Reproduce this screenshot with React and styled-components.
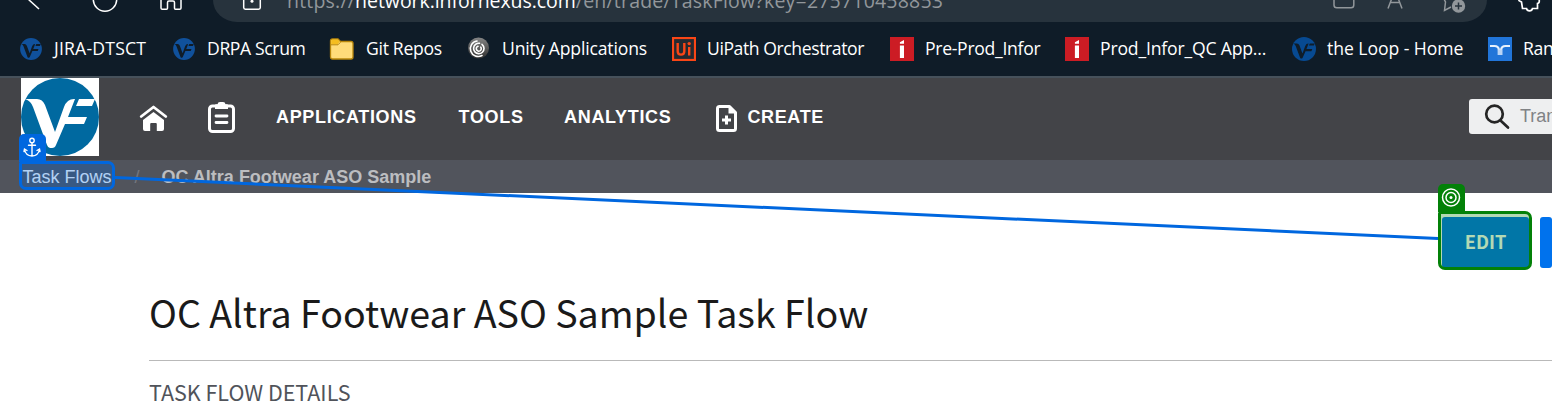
import React from "react";
import styled, { createGlobalStyle } from "styled-components";

const ui = `"Open Sans", "Noto Sans", sans-serif`;
const arial = `"Liberation Sans", Arial, sans-serif`;
const source = `"Noto Sans CJK SC", "Open Sans", sans-serif`;

const GlobalStyle = createGlobalStyle`
  * { box-sizing: border-box; }
  body { margin: 0; background: #fff; overflow: hidden; }
  svg { display: block; flex: none; }
`;

const Page = styled.div`
  position: relative;
  width: 1552px;
  height: 413px;
  overflow: hidden;
  background: #fff;
`;

const Toolbar = styled.div`
  display: flex;
  height: 22px;
  background: #0f1c28;
  color: #fff;
`;

const BrowserButtons = styled.div`
  width: 213px;
  flex: none;
`;

const AddressBar = styled.div`
  display: flex;
  align-items: flex-start;
  width: 1274px;
  height: 22px;
  flex: none;
  padding-left: 28px;
  overflow: hidden;
  background: #27333d;
  border-radius: 0 0 24px 24px / 0 0 22px 22px;
`;

const Url = styled.div`
  width: 1050px;
  margin: -13px 0 0 24px;
  font: 400 19.5px/27px ${ui};
  letter-spacing: 0.2px;
  color: #92979b;
  white-space: pre;
`;

const Host = styled.span`
  color: #fff;
  letter-spacing: -0.05px;
`;

const Bookmarks = styled.div`
  display: flex;
  align-items: center;
  height: 56px;
  padding-left: 19px;
  background: #0f1c28;
  border-bottom: 2px solid #46515b;
  overflow: hidden;
`;

const Bookmark = styled.div`
  display: flex;
  align-items: center;
  gap: 11px;
  flex: none;
  width: ${(p) => p.$width}px;
  font: 400 17.6px/24px ${ui};
  letter-spacing: ${(p) => p.$track}px;
  color: #fff;
  white-space: pre;
`;

const BookmarkLabel = styled.span`
  padding-bottom: 2px;
`;

const NavBar = styled.div`
  display: flex;
  align-items: flex-start;
  height: 82px;
  padding-left: 21px;
  background: #434448;
`;

const Logo = styled.div`
  width: 78px;
  height: 78px;
  flex: none;
  background: #fff;
`;

const NavIcon = styled.div`
  margin: ${(p) => p.$top}px 0 0 ${(p) => p.$left}px;
`;

const NavLink = styled.div`
  flex: none;
  margin: 29px 0 0 ${(p) => p.$left}px;
  font: 700 18px/21px ${arial};
  letter-spacing: 0.66px;
  color: #fff;
  white-space: pre;
`;

const Search = styled.div`
  display: flex;
  flex: none;
  align-items: center;
  gap: 10px;
  width: 120px;
  height: 35px;
  margin: 21px -37px 0 auto;
  padding-left: 15px;
  border-radius: 3px;
  background: #eeeff0;
  font: 400 18px/21px ${arial};
  color: #808285;
`;

const Crumbs = styled.div`
  display: flex;
  height: 33px;
  padding: 7px 0 0 22.5px;
  background: #51545c;
  font: 400 18px/21px ${arial};
  color: #bcbdc0;
  white-space: pre;
`;

const CrumbLink = styled.span`
  color: #fff;
`;

const Separator = styled.span`
  margin: 0 22px 0 23px;
  color: #74777f;
`;

const Current = styled.b`
  font-weight: 700;
`;

const Actions = styled.div`
  display: flex;
  justify-content: flex-end;
  gap: 11px;
  padding-top: 24px;
`;

const Button = styled.div`
  width: ${(p) => p.$width}px;
  height: 51px;
  border-radius: 3px;
  background: #0072ed;
  font: 700 18.2px/49px ${source};
  text-align: center;
  color: #fff;
`;

const Main = styled.div`
  margin: 13px 0 0 149px;
`;

const Title = styled.div`
  height: 80px;
  border-bottom: 1px solid #b9b9b9;
  font: 400 37.6px/62px ${source};
  color: #1a1a1a;
  white-space: pre;
`;

const Subtitle = styled.div`
  padding-top: 15px;
  font: 400 21.5px/32px ${source};
  color: #50535a;
  white-space: pre;
`;

const Connector = styled.svg`
  position: absolute;
  left: 0;
  top: 0;
  pointer-events: none;
`;

const Marker = styled.div`
  position: absolute;
  left: ${(p) => p.$x}px;
  top: ${(p) => p.$y}px;
  width: ${(p) => p.$w}px;
  height: ${(p) => p.$h}px;
  border: 3px solid ${(p) => p.$color};
  border-radius: 7px;
  border-top-left-radius: 3px;
  background: ${(p) => p.$fill};
`;

const MarkerTab = styled.div`
  position: absolute;
  left: -3px;
  top: -30px;
  width: 27px;
  height: 28px;
  border-radius: 5px 5px 0 0;
  background: ${(p) => p.$color};
`;

const VfMark = ({ size, bg, fg, inset = 0 }) => (
  <svg
    width={size}
    height={size}
    viewBox={`${-inset} ${-inset} ${78 + 2 * inset} ${78 + 2 * inset}`}
  >
    <circle cx="39" cy="39" r="39" fill={bg} />
    <path
      fill={fg}
      d="M4 21H16Q21.500 21 24 27L34 54L43 29Q46 21 53 21H54L47 39H66L63 46H44L35 67Q34 70 31 70H29Q27 70 26 67L12 29Q10 23 4 21ZM58 21H74L71 28H55Z"
    />
  </svg>
);

const Folder = () => (
  <svg width="26" height="24" viewBox="0 0 26 24">
    <path d="M1.5 4Q1.5 2 3.5 2H9L11.5 4.5H22Q24 4.5 24 6.5V20Q24 22 22 22H3.5Q1.5 22 1.5 20Z" fill="#ffdc7a" stroke="#b8860b" strokeWidth="1.3" />
    <path d="M2.2 4Q2.2 2.6 3.5 2.6H8.7L10.7 4.8L8.7 7.3H2.2Z" fill="#f5bd1f" />
    <path d="M2 7.8H9L11.5 5.2" fill="none" stroke="#b8860b" strokeWidth="1" />
  </svg>
);

const Citrix = () => (
  <svg width="24" height="24" viewBox="0 0 24 24">
    <defs>
      <linearGradient id="orb" x1="0" y1="0" x2="0" y2="1">
        <stop offset="0" stopColor="#858585" />
        <stop offset="1" stopColor="#303030" />
      </linearGradient>
    </defs>
    <circle cx="11.5" cy="11" r="10.5" fill="url(#orb)" />
    <g fill="none" stroke="#fff" strokeWidth="1.6" strokeLinecap="round">
      <path d="M10 4A7.8 7.8 0 1 0 15 18.5" />
      <path d="M12.5 6.3A5.2 5.2 0 1 0 17 11.500Q17 9 15 7.300" />
      <path d="M13.800 10.2A2.5 2.5 0 1 1 11 9.300" />
    </g>
  </svg>
);

const UiPath = () => (
  <svg width="24" height="24" viewBox="0 0 24 24">
    <rect x="1" y="1" width="22" height="22" fill="#242a31" stroke="#fa4616" strokeWidth="2.2" />
    <path d="M5.7 6V14.2Q5.7 17.6 9 17.6T12.3 14.2V6M17.2 10V18.6" fill="none" stroke="#fa4616" strokeWidth="2.4" />
    <circle cx="17.2" cy="6.6" r="1.7" fill="#fa4616" />
  </svg>
);

const Infor = () => (
  <svg width="24" height="24" viewBox="0 0 24 24">
    <rect width="24" height="24" fill="#cc1c24" />
    <path d="M9.9 5.2L14 3V6.7H9.9ZM9.9 8.5H14V21H9.9Z" fill="#fff" />
  </svg>
);

const Rand = () => (
  <svg width="24" height="24" viewBox="0 0 24 24">
    <rect width="24" height="24" fill="#2175d9" />
    <path d="M2 9H6.5Q10.5 9 11 13M22 9H17.5Q13.5 9 13 13" fill="none" stroke="#e8f1fc" strokeWidth="2.2" />
    <rect x="9.6" y="12.5" width="4.9" height="5.5" fill="#b9d4f5" />
  </svg>
);

const bookmarks = [
  { label: "JIRA-DTSCT", icon: "vfSmall", width: 153, track: 0.2 },
  { label: "DRPA Scrum", icon: "vfSmall", width: 157, track: -0.38 },
  { label: "Git Repos", icon: "folder", width: 138, track: -0.3 },
  { label: "Unity Applications", icon: "citrix", width: 205, track: -0.16 },
  { label: "UiPath Orchestrator", icon: "uipath", width: 218, track: -0.42 },
  { label: "Pre-Prod_Infor", icon: "infor", width: 175, track: -0.3 },
  { label: "Prod_Infor_QC App...", icon: "infor", width: 227, track: -0.18 },
  { label: "the Loop - Home", icon: "vf", width: 196, track: -0.06 },
  { label: "Rand", icon: "rand", width: 90, track: -0.3 },
];

const icons = {
  vf: <VfMark size={24} bg="#074a92" fg="#0f1c28" />,
  vfSmall: <VfMark size={24} inset={4} bg="#10519c" fg="#0f1c28" />,
  folder: <Folder />,
  citrix: <Citrix />,
  uipath: <UiPath />,
  infor: <Infor />,
  rand: <Rand />,
};

export default function App() {
  return (
    <>
      <GlobalStyle />
      <Page>
        <Toolbar>
          <BrowserButtons>
            <svg width="213" height="22" viewBox="0 0 213 22" fill="none" stroke="#fff" strokeWidth="1.5">
              <path d="M28 -1L39 9" />
              <circle cx="105" cy="-0.5" r="11.7" />
              <path d="M161 -3V8Q161 9.3 162.3 9.3H166.5Q167.5 9.3 167.5 8.3V2.5Q167.5 1 169 1H173Q174.5 1 174.5 2.5V8.3Q174.5 9.3 175.5 9.3H179.7Q181 9.3 181 8V-3" />
            </svg>
          </BrowserButtons>
          <AddressBar>
            <svg width="22" height="22" viewBox="0 0 22 22">
              <path d="M2.7 -4V7.5Q2.7 9.2 4.4 9.2H17.6Q19.3 9.2 19.3 7.5V-4" fill="none" stroke="#fff" strokeWidth="1.5" />
              <circle cx="11" cy="1.3" r="1.5" fill="#fff" />
            </svg>
            <Url>https://<Host>network.infornexus.com</Host>/en/trade/TaskFlow?key=275710458853</Url>
            <svg width="150" height="22" viewBox="1337 0 150 22" overflow="visible" fill="none" stroke="#92979b" strokeWidth="1.5">
              <path d="M1334 -3V5Q1334 7.8 1336.8 7.8H1351Q1353.8 7.8 1353.8 5V-3M1388 8.5L1393.5 -6M1402 8.5L1396.5 -6M1390.5 2.5H1399.5M1443.5 -2L1445.5 2L1444.5 10.5L1451 7" />
              <circle cx="1458.5" cy="6" r="6.7" fill="#92979b" stroke="none" />
              <path d="M1458.5 2.5V9.5M1455 6H1462" stroke="#27333d" />
            </svg>
          </AddressBar>
          <svg width="65" height="22" viewBox="1487 0 65 22" fill="none" stroke="#fff" strokeWidth="1.7">
            <path d="M1519 -1V0.5L1521.5 2L1522.5 8.5H1526.5Q1527 10.8 1529.5 10.8T1532.5 8.5H1537.5V3.5Q1540 3 1539 -1" />
          </svg>
        </Toolbar>
        <Bookmarks>
          {bookmarks.map((b) => (
            <Bookmark key={b.label} $width={b.width} $track={b.track}>
              {icons[b.icon]}
              <BookmarkLabel>{b.label}</BookmarkLabel>
            </Bookmark>
          ))}
        </Bookmarks>
        <NavBar>
          <Logo>
            <VfMark size={78} bg="#0069a0" fg="#fff" />
          </Logo>
          <NavIcon $top={27} $left={40}>
            <svg width="29" height="27" viewBox="139 105 29 27" fill="#fff">
              <path d="M141.2 116.5L153.5 107L165.8 116.5" fill="none" stroke="#fff" strokeWidth="2.8" strokeLinecap="round" strokeLinejoin="round" />
              <path d="M143 120L153.5 112L164 120V129Q164 131 162 131H156.8V124Q156.8 123 155.8 123H151.2Q150.2 123 150.2 124V131H145Q143 131 143 129Z" />
            </svg>
          </NavIcon>
          <NavIcon $top={23} $left={39}>
            <svg width="29" height="33" viewBox="207 101 29 33">
              <rect x="209.5" y="106" width="24" height="25.5" rx="3" fill="none" stroke="#fff" strokeWidth="3" />
              <path d="M215 109V105Q215 104.3 216 104.3H217.5Q217.8 102 220 102H223Q225.2 102 225.5 104.3H227Q228 104.3 228 105V109Z" fill="#fff" />
              <path d="M216 116H227M216 122.5H227" stroke="#fff" strokeWidth="2.8" strokeLinecap="round" />
            </svg>
          </NavIcon>
          <NavLink $left={40}>APPLICATIONS</NavLink>
          <NavLink $left={42}>TOOLS</NavLink>
          <NavLink $left={40.5}>ANALYTICS</NavLink>
          <NavIcon $top={26} $left={43.5}>
            <svg width="22" height="29" viewBox="715 104 22 29">
              <path d="M719 106.5H729.5L735.5 112.5V128.5Q735.5 130.5 733.5 130.5H719.5Q717.5 130.5 717.5 128.5V108.5Q717.5 106.5 719.5 106.5Z" fill="none" stroke="#fff" strokeWidth="3" strokeLinejoin="round" />
              <path d="M728.5 105.5V113.5H736.5Z" fill="#fff" />
              <path d="M726.5 115.5V124.5M722 120H731" stroke="#fff" strokeWidth="3" />
            </svg>
          </NavIcon>
          <NavLink $left={10.5}>CREATE</NavLink>
          <Search>
            <svg width="26" height="26" viewBox="0 0 26 26" fill="none" stroke="#252525" strokeWidth="2.7" strokeLinecap="round">
              <circle cx="10.5" cy="10" r="8.3" />
              <path d="M16.5 16.5L24 23.5" />
            </svg>
            Transactions
          </Search>
        </NavBar>
        <Crumbs>
          <CrumbLink>Task Flows</CrumbLink>
          <Separator>/</Separator>
          <Current>OC Altra Footwear ASO Sample</Current>
        </Crumbs>
        <Actions>
          <Button $width={87}>EDIT</Button>
          <Button $width={12} />
        </Actions>
        <Main>
          <Title>OC Altra Footwear ASO Sample Task Flow</Title>
          <Subtitle>TASK FLOW DETAILS</Subtitle>
        </Main>
        <Marker $x={19} $y={161} $w={96} $h={28.5} $color="#0067df" $fill="rgba(0,103,223,0.3)">
          <MarkerTab $color="#0067df">
            <svg width="27" height="27" viewBox="0 0 27 27" fill="none" stroke="#fff" strokeWidth="1.4" strokeLinecap="round">
              <circle cx="13" cy="6.5" r="2.2" />
              <path d="M13 8.7V21.5M9.5 11.3H16.5M5.5 15.5Q6.5 21.5 13 22Q19.5 21.5 20.5 15.5M5 17.5L5.5 15L8 16.5M21 17.5L20.5 15L18 16.5" />
            </svg>
          </MarkerTab>
        </Marker>
        <Marker $x={1437.5} $y={210.5} $w={94.5} $h={59.5} $color="#038108" $fill="rgba(3,129,8,0.3)">
          <MarkerTab $color="#038108">
            <svg width="27" height="27" viewBox="0 0 27 27" fill="none" stroke="#fff" strokeWidth="1.5">
              <circle cx="13" cy="13.5" r="8.5" />
              <circle cx="13" cy="13.5" r="5" />
              <circle cx="13" cy="13.5" r="1.5" fill="#fff" stroke="none" />
            </svg>
          </MarkerTab>
        </Marker>
        <Connector width="1552" height="413" viewBox="0 0 1552 413">
          <path d="M115 177.5L1438 238.5" stroke="#0067df" strokeWidth="3" />
        </Connector>
      </Page>
    </>
  );
}
